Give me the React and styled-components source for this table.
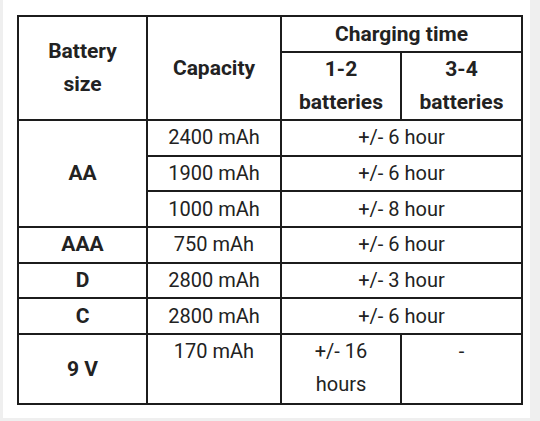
import React from 'react';
import styled, { createGlobalStyle } from 'styled-components';

const GlobalStyle = createGlobalStyle`
  body {
    margin: 0;
    background: #efefef;
    font-family: Roboto, 'Liberation Sans', sans-serif;
  }
`;

const rows = [
  { size: 'AA', span: 3, capacity: '2400 mAh', time: '+/- 6 hour' },
  { capacity: '1900 mAh', time: '+/- 6 hour' },
  { capacity: '1000 mAh', time: '+/- 8 hour' },
  { size: 'AAA', span: 1, capacity: '750 mAh', time: '+/- 6 hour' },
  { size: 'D', span: 1, capacity: '2800 mAh', time: '+/- 3 hour' },
  { size: 'C', span: 1, capacity: '2800 mAh', time: '+/- 6 hour' }
];

function App() {
  return (
    <>
      <GlobalStyle />
      <Card>
        <Table>
          <colgroup>
            <col style={{ width: 129 }} />
            <col style={{ width: 134 }} />
            <col style={{ width: 120 }} />
            <col style={{ width: 121 }} />
          </colgroup>
          <thead>
            <tr>
              <Head rowSpan={2}>Battery<br />size</Head>
              <Head rowSpan={2}>Capacity</Head>
              <Head colSpan={2} $short>Charging time</Head>
            </tr>
            <tr>
              <Head>1-2<br />batteries</Head>
              <Head>3-4<br />batteries</Head>
            </tr>
          </thead>
          <tbody>
            {rows.map((r, i) => (
              <tr key={i}>
                {r.size && <Size rowSpan={r.span}>{r.size}</Size>}
                <Cell>{r.capacity}</Cell>
                <Cell colSpan={2}>{r.time}</Cell>
              </tr>
            ))}
            <TallRow>
              <Size>9 V</Size>
              <Cell $top>170 mAh</Cell>
              <Cell $top>+/- 16<br />hours</Cell>
              <Cell $top>-</Cell>
            </TallRow>
          </tbody>
        </Table>
      </Card>
    </>
  );
}

const Card = styled.div`
  margin-left: 3px;
  width: 527px;
  height: 418px;
  background: #ffffff;
  padding-top: 15px;
  padding-left: 14px;
  box-sizing: border-box;
`;

const Table = styled.table`
  border-collapse: collapse;
  table-layout: fixed;
  width: 506px;
  color: #222222;
`;

const Head = styled.th`
  border: 2px solid #1c1c1c;
  font-size: 21px;
  font-weight: 700;
  line-height: 33px;
  height: ${(p) => (p.$short ? '34px' : 'auto')};
  padding: 0;
  text-align: center;
  vertical-align: middle;
`;

const Cell = styled.td`
  border: 2px solid #1c1c1c;
  font-size: 20px;
  font-weight: 400;
  line-height: 33px;
  height: 33.7px;
  padding: 0;
  text-align: center;
  vertical-align: ${(p) => (p.$top ? 'top' : 'middle')};
`;

const Size = styled(Cell)`
  font-size: 21px;
  font-weight: 700;
`;

const TallRow = styled.tr`
  height: 70px;
`;

export default App;
